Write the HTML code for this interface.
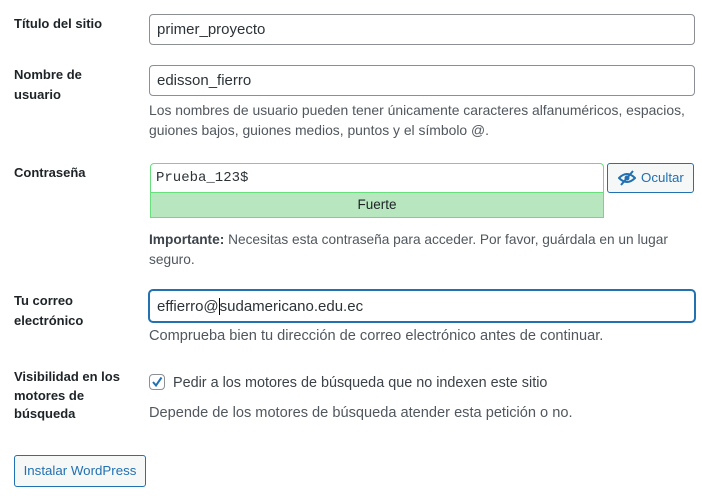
<!DOCTYPE html>
<html><head><meta charset="utf-8"><style>
body{margin:0;width:702px;height:502px;background:#fff;font-family:"Liberation Sans",sans-serif;color:#1d2327;position:relative;overflow:hidden}
.a{position:absolute;white-space:nowrap}
.lab{font-weight:bold;font-size:13px;line-height:20px;left:14px}
.inp{position:absolute;box-sizing:border-box;border:1px solid #8c8f94;border-radius:4px;background:#fff;font-size:15px;padding-left:7px;display:flex;align-items:center;color:#2c3338}
.help{font-size:14px;line-height:20px;color:#50575e;left:149px}
</style></head><body>
<div class="a lab" style="top:14px">Título del sitio</div>
<div class="inp" style="left:149px;top:14px;width:546px;height:31px">primer_proyecto</div>

<div class="a lab" style="top:65px">Nombre de<br>usuario</div>
<div class="inp" style="left:149px;top:65px;width:546px;height:31px">edisson_fierro</div>
<div class="a help" style="top:100px;font-size:13.9px">Los nombres de usuario pueden tener únicamente caracteres alfanuméricos, espacios,<br>guiones bajos, guiones medios, puntos y el símbolo @.</div>

<div class="a lab" style="top:163px">Contraseña</div>
<div class="inp" style="left:150px;top:163px;width:454px;height:30px;border-color:#68de7c;border-radius:4px 4px 0 0;font-family:'Liberation Mono',monospace;font-size:14px;padding-left:5px">Prueba_123$</div>
<div class="a" style="left:150px;top:192px;width:454px;height:26px;box-sizing:border-box;background:#b8e6bf;border:1px solid #68de7c;font-size:13.5px;text-align:center;line-height:24px">Fuerte</div>
<div class="a" style="left:607px;top:163px;width:87px;height:30px;box-sizing:border-box;border:1px solid #2271b1;border-radius:3px;background:#f6f7f7;color:#2271b1;font-size:13.3px;line-height:28px">
<svg style="position:absolute;left:10px;top:6px" width="18" height="16" viewBox="0 0 18 16"><path d="M1 8 Q9 0 17 8 Q9 16 1 8Z" fill="none" stroke="#2271b1" stroke-width="2"/><circle cx="9" cy="8" r="2.5" fill="#2271b1"/><path d="M3 15 L15 1" stroke="#2271b1" stroke-width="2"/></svg>
<span style="position:absolute;left:33px">Ocultar</span></div>
<div class="a help" style="top:230px;color:#50575e;font-size:13.7px"><b style="color:#3c434a">Importante:</b> Necesitas esta contraseña para acceder. Por favor, guárdala en un lugar<br>seguro.</div>

<div class="a lab" style="top:291px">Tu correo<br>electrónico</div>
<div class="inp" style="left:149px;top:290px;width:546px;height:32px;border-color:#2271b1;box-shadow:0 0 0 1px #2271b1">effierro@<span style="border-left:1px solid #000;height:17px;margin-left:0"></span>sudamericano.edu.ec</div>
<div class="a help" style="top:326px;font-size:14.6px">Comprueba bien tu dirección de correo electrónico antes de continuar.</div>

<div class="a lab" style="top:368px;line-height:18.5px">Visibilidad en los<br>motores de<br>búsqueda</div>
<div class="a" style="left:149px;top:374px;width:16px;height:16px;box-sizing:border-box;border:1px solid #8c8f94;border-radius:4px">
<svg width="14" height="14" viewBox="0 0 14 14" style="position:absolute;left:0;top:0"><path d="M3 7 L6 10.5 L11.5 2.5" fill="none" stroke="#2271b1" stroke-width="2"/></svg></div>
<div class="a help" style="left:173px;top:373px;color:#3c434a;font-size:14.4px">Pedir a los motores de búsqueda que no indexen este sitio</div>
<div class="a help" style="top:403px;font-size:14.6px">Depende de los motores de búsqueda atender esta petición o no.</div>

<div class="a" style="left:14px;top:455px;width:132px;height:32px;box-sizing:border-box;border:1px solid #2271b1;border-radius:3px;background:#f6f7f7;color:#2271b1;font-size:13.3px;line-height:30px;text-align:center">Instalar WordPress</div>
</body></html>
